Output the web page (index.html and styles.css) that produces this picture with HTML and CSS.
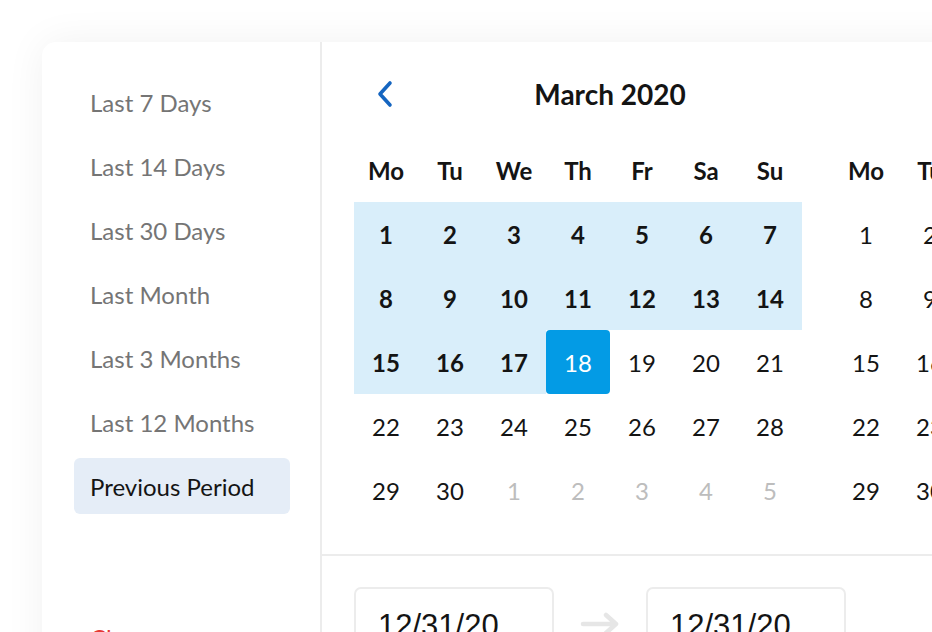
FILE: index.html
```
<!DOCTYPE html>
<html lang="en">
<head>
    <meta charset="UTF-8">
    <meta name="viewport" content="width=device-width, initial-scale=1.0">
    <title>Date Range Picker</title>
    <link rel="stylesheet" href="styles.css">
</head>
<body>
    <div class="picker">
        <aside class="presets">
            <ul class="preset-list">
                <li class="preset">Last 7 Days</li>
                <li class="preset">Last 14 Days</li>
                <li class="preset">Last 30 Days</li>
                <li class="preset">Last Month</li>
                <li class="preset">Last 3 Months</li>
                <li class="preset">Last 12 Months</li>
                <li class="preset active">Previous Period</li>
            </ul>
            <div class="clear">Clear</div>
        </aside>

        <main class="panel">
            <div class="months">
                <section class="month">
                    <div class="month-header">
                        <button class="nav prev" aria-label="Previous month">
                            <svg width="20" height="28" viewBox="0 0 20 28">
                                <path d="M14 3 L4 14 L14 25" fill="none" stroke="#1565c0" stroke-width="3.6" stroke-linecap="round" stroke-linejoin="round"/>
                            </svg>
                        </button>
                        <h2 class="month-title">March 2020</h2>
                    </div>
                    <div class="grid">
                        <div class="wd">Mo</div><div class="wd">Tu</div><div class="wd">We</div><div class="wd">Th</div><div class="wd">Fr</div><div class="wd">Sa</div><div class="wd">Su</div>

                        <div class="day in-range">1</div><div class="day in-range">2</div><div class="day in-range">3</div><div class="day in-range">4</div><div class="day in-range">5</div><div class="day in-range">6</div><div class="day in-range">7</div>
                        <div class="day in-range">8</div><div class="day in-range">9</div><div class="day in-range">10</div><div class="day in-range">11</div><div class="day in-range">12</div><div class="day in-range">13</div><div class="day in-range">14</div>
                        <div class="day in-range">15</div><div class="day in-range">16</div><div class="day in-range">17</div><div class="day selected">18</div><div class="day">19</div><div class="day">20</div><div class="day">21</div>
                        <div class="day">22</div><div class="day">23</div><div class="day">24</div><div class="day">25</div><div class="day">26</div><div class="day">27</div><div class="day">28</div>
                        <div class="day">29</div><div class="day">30</div><div class="day muted">1</div><div class="day muted">2</div><div class="day muted">3</div><div class="day muted">4</div><div class="day muted">5</div>
                    </div>
                </section>

                <section class="month">
                    <div class="month-header">
                        <h2 class="month-title">June 2020</h2>
                    </div>
                    <div class="grid">
                        <div class="wd">Mo</div><div class="wd">Tu</div><div class="wd">We</div><div class="wd">Th</div><div class="wd">Fr</div><div class="wd">Sa</div><div class="wd">Su</div>

                        <div class="day">1</div><div class="day">2</div><div class="day">3</div><div class="day">4</div><div class="day">5</div><div class="day">6</div><div class="day">7</div>
                        <div class="day">8</div><div class="day">9</div><div class="day">10</div><div class="day">11</div><div class="day">12</div><div class="day">13</div><div class="day">14</div>
                        <div class="day">15</div><div class="day">16</div><div class="day">17</div><div class="day">18</div><div class="day">19</div><div class="day">20</div><div class="day">21</div>
                        <div class="day">22</div><div class="day">23</div><div class="day">24</div><div class="day">25</div><div class="day">26</div><div class="day">27</div><div class="day">28</div>
                        <div class="day">29</div><div class="day">30</div><div class="day muted">1</div><div class="day muted">2</div><div class="day muted">3</div><div class="day muted">4</div><div class="day muted">5</div>
                    </div>
                </section>
            </div>

            <div class="range-inputs">
                <div class="date-input">12/31/20</div>
                <svg class="range-arrow" width="46" height="24" viewBox="0 0 46 24">
                    <path d="M6 12 H38 M29 3 L39 12 L29 21" fill="none" stroke="#e6e6e6" stroke-width="4.5" stroke-linecap="round" stroke-linejoin="round"/>
                </svg>
                <div class="date-input">12/31/20</div>
            </div>
        </main>
    </div>
</body>
</html>
```

FILE: styles.css
```
:root {
    --text: #141414;
    --muted: #757575;
    --faint: #bdbdbd;
    --line: #ececec;
    --range: #d9eefa;
    --accent: #039be5;
    --accent-dark: #1565c0;
    --preset-active: #e5edf7;
}

html, body {
    height: 100%;
}

body {
    margin: 0;
    padding: 42px 0 0 42px;
    box-sizing: border-box;
    overflow: hidden;
    background: #fff;
    font-family: Lato, "Noto Sans", sans-serif;
    color: var(--text);
}

.picker {
    display: flex;
    width: max-content;
    min-height: 720px;
    background: #fff;
    border-radius: 14px;
    box-shadow: 0 0 40px rgba(0, 0, 0, 0.06);
}

/* left column with quick ranges */
.presets {
    width: 280px;
    box-sizing: border-box;
    padding: 33px 30px 0 32px;
    border-right: 2px solid var(--line);
}

.preset-list {
    list-style: none;
    margin: 0;
    padding: 0;
    display: flex;
    flex-direction: column;
    gap: 8px;
}

.preset {
    height: 56px;
    line-height: 56px;
    padding: 0 16px;
    border-radius: 6px;
    font-size: 24px;
    color: var(--muted);
}

.preset.active {
    background: var(--preset-active);
    color: var(--text);
    margin-top: -1px;
    line-height: 58px;
}

.clear {
    margin-top: 96px;
    height: 56px;
    line-height: 56px;
    padding: 0 16px;
    font-size: 24px;
    color: #e53935;
}

/* calendars */
.panel {
    display: flex;
    flex-direction: column;
}

.months {
    display: flex;
    gap: 32px;
    padding: 32px 32px 32px;
    border-bottom: 2px solid var(--line);
}

.month-header {
    display: flex;
    align-items: center;
    height: 40px;
    margin-bottom: 24px;
}

.nav {
    width: 64px;
    height: 40px;
    padding: 0;
    border: none;
    background: none;
    display: flex;
    align-items: center;
    justify-content: center;
    cursor: pointer;
}

.month-title {
    flex: 1;
    margin: 0;
    text-align: center;
    font-size: 28px;
    font-weight: 700;
}

.grid {
    display: grid;
    grid-template-columns: repeat(7, 64px);
    grid-auto-rows: 64px;
}

.wd,
.day {
    display: flex;
    align-items: center;
    justify-content: center;
    padding-top: 1px;
    font-size: 24px;
}

.wd {
    font-weight: 700;
}

.day.in-range {
    background: var(--range);
    font-weight: 700;
}

.day.selected {
    background: var(--accent);
    color: #fff;
    border-radius: 4px;
}

.day.muted {
    color: var(--faint);
}

/* typed range at the bottom */
.range-inputs {
    display: flex;
    align-items: flex-start;
    gap: 23px;
    padding: 31px 32px 0;
}

.date-input {
    width: 200px;
    height: 78px;
    box-sizing: border-box;
    padding: 0 22px;
    border: 2px solid var(--line);
    border-radius: 7px;
    display: flex;
    align-items: center;
    font-family: "Liberation Sans", Arial, sans-serif;
    font-size: 31px;
    color: var(--text);
}

.range-arrow {
    flex: none;
    margin-top: 25px;
}
```
